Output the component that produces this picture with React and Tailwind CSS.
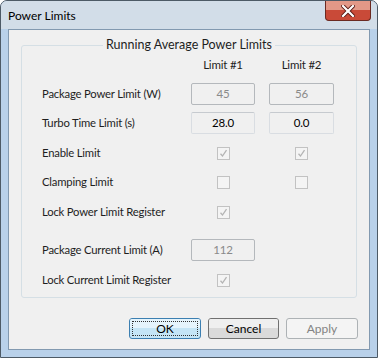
import React from 'react';

const font = { fontFamily: 'Lato, "Noto Sans", sans-serif' };

function Box({ value, dim, w = 'w-[64px]' }) {
  return (
    <div
      className={`${w} h-[22px] flex items-center justify-center rounded-[2px] border text-[11.5px] tracking-[-0.2px] ${
        dim ? 'border-[#b4b8bc] text-[#8a8a8a]' : 'border-[#d9dde2] border-t-[#c6cacf] text-black'
      } bg-[#f0f0f0]`}
    >
      {value}
    </div>
  );
}

function Check({ checked }) {
  return (
    <div className="w-[13px] h-[13px] border border-[#c2c2c2] bg-[#f4f4f4] flex items-center justify-center">
      {checked && (
        <svg width="9" height="9" viewBox="0 0 9 9">
          <path d="M1.5 4.8 L3.5 7 L7.5 1.2" fill="none" stroke="#b4b4b4" strokeWidth="1.3" />
        </svg>
      )}
    </div>
  );
}

function Row({ label, h, mt, c1, c2 }) {
  return (
    <div className={`flex items-center ${h} ${mt}`}>
      <div className="w-[149px] text-[11.3px] tracking-[-0.2px] text-[#1e1e1e] whitespace-nowrap">{label}</div>
      <div className="w-[64px] flex justify-center">{c1}</div>
      <div className="w-[14px]" />
      <div className="w-[65px] flex justify-center">{c2}</div>
    </div>
  );
}

function Button({ children, kind }) {
  if (kind === 'default') {
    return (
      <div className="relative w-[72px] h-[21px] rounded-[3px] border border-[#3c7fb1] bg-[#c4e5f6] overflow-hidden flex flex-col">
        <div className="h-[9px] bg-[#e5f4fc]" />
        <div className="absolute inset-[2px] border border-dotted border-[#333] flex items-center justify-center text-[12px] text-black">
          {children}
        </div>
      </div>
    );
  }
  if (kind === 'disabled') {
    return (
      <div className="w-[72px] h-[21px] rounded-[3px] border border-[#adb2b5] bg-[#f4f4f4] flex items-center justify-center text-[12px] text-[#838383]">
        {children}
      </div>
    );
  }
  return (
    <div className="relative w-[71px] h-[21px] rounded-[3px] border border-[#707070] bg-[#dadada] overflow-hidden flex flex-col">
      <div className="h-[9px] bg-[#efefef]" />
      <div className="absolute inset-0 flex items-center justify-center text-[12px] text-black">{children}</div>
    </div>
  );
}

export default function App() {
  return (
    <div style={font} className="w-[378px] h-[358px] overflow-hidden bg-white">
      <div className="w-[378px] h-[358px] rounded-t-[7px] border border-[#4d5a66] bg-[#b9d1ea] flex flex-col">
        {/* title bar */}
        <div className="h-[28px] flex items-start justify-between bg-[#d2dde8] rounded-t-[6px]">
          <div className="pl-[7px] pt-[6px] text-[12px] text-black">Power Limits</div>
          <div className="mr-[6px] w-[46px] h-[20px] rounded-b-[4px] border border-t-0 border-[#6b2a22] bg-[#c94a38] flex flex-col overflow-hidden relative">
            <div className="h-[9px] bg-[#e29887]" />
            <div className="absolute inset-0 flex items-center justify-center">
              <svg width="14" height="12" viewBox="0 0 14 12">
                <path d="M2 1 L12 11 M12 1 L2 11" stroke="#5a1a14" strokeWidth="4" strokeLinecap="square" />
                <path d="M2 1 L12 11 M12 1 L2 11" stroke="#ffffff" strokeWidth="2.2" strokeLinecap="square" />
              </svg>
            </div>
          </div>
        </div>
        {/* client area */}
        <div className="mx-[7px] h-[321px] border border-[#8299b0] bg-[#f0f0f0] flex flex-col">
          <div className="ml-[12px] mt-[15px] w-[336px] h-[253px] rounded-[3px] border border-[#d5dfe5] flex flex-col">
            <div className="h-0 flex justify-center">
              <span className="-mt-[10px] h-[18px] px-[3px] bg-[#f0f0f0] text-[12.5px] text-[#1e1e1e]">
                Running Average Power Limits
              </span>
            </div>
            <div className="pl-[20px] flex flex-col">
              <Row
                label=""
                h="h-[20px]"
                mt="mt-[9px]"
                c1={<span className="text-[11.5px] tracking-[-0.2px] text-[#1e1e1e]">Limit #1</span>}
                c2={<span className="text-[11.5px] tracking-[-0.2px] text-[#1e1e1e]">Limit #2</span>}
              />
              <Row label="Package Power Limit (W)" h="h-[22px]" mt="mt-[8px]" c1={<Box value="45" dim />} c2={<Box value="56" dim w="w-[65px]" />} />
              <Row label="Turbo Time Limit (s)" h="h-[22px]" mt="mt-[7px]" c1={<Box value="28.0" />} c2={<Box value="0.0" w="w-[65px]" />} />
              <Row label="Enable Limit" h="h-[29px]" mt="mt-[5px]" c1={<Check checked />} c2={<Check checked />} />
              <Row label="Clamping Limit" h="h-[29px]" mt="mt-0" c1={<Check />} c2={<Check />} />
              <Row label="Lock Power Limit Register" h="h-[30px]" mt="mt-0" c1={<Check checked />} c2={null} />
              <Row label="Package Current Limit (A)" h="h-[22px]" mt="mt-[12px]" c1={<Box value="112" dim />} c2={null} />
              <Row label="Lock Current Limit Register" h="h-[28px]" mt="mt-[5px]" c1={<Check checked />} c2={null} />
            </div>
          </div>
          <div className="mt-[20px] ml-[120px] flex gap-[7px]">
            <Button kind="default">OK</Button>
            <Button>Cancel</Button>
            <Button kind="disabled">Apply</Button>
          </div>
        </div>
      </div>
    </div>
  );
}
